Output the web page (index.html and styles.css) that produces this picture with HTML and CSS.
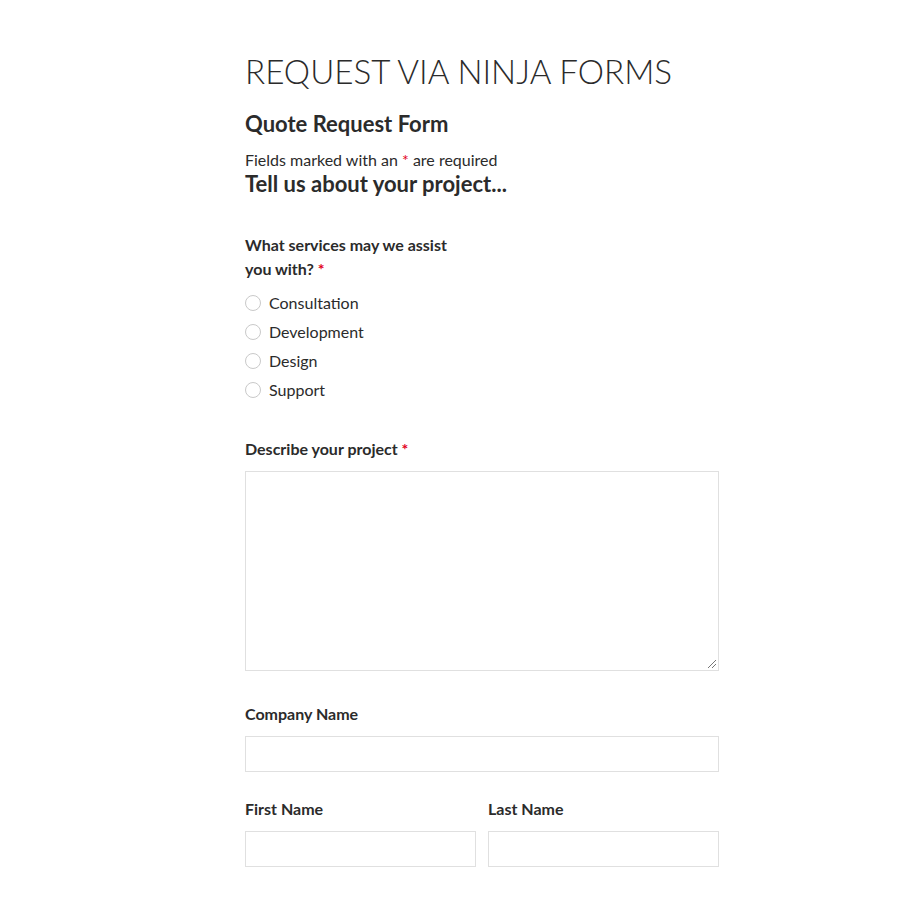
FILE: index.html
```html
<!DOCTYPE html>
<html>
<head>
<meta charset="utf-8">
<link rel="stylesheet" href="styles.css">
</head>
<body>
<main class="page">
  <h1 class="page-title">Request via Ninja Forms</h1>
  <h2 class="form-title">Quote Request Form</h2>
  <p class="req-note">Fields marked with an <span class="req">*</span> are required</p>
  <h3 class="section-title">Tell us about your project...</h3>

  <div class="field field-services">
    <div class="label narrow">What services may we assist you with?&nbsp;<span class="req">*</span></div>
    <ul class="radios">
      <li class="radio-row"><span class="radio"></span>Consultation</li>
      <li class="radio-row"><span class="radio"></span>Development</li>
      <li class="radio-row"><span class="radio"></span>Design</li>
      <li class="radio-row"><span class="radio"></span>Support</li>
    </ul>
  </div>

  <div class="field field-describe">
    <div class="label">Describe your project <span class="req">*</span></div>
    <div class="textarea"><span class="grip"></span></div>
  </div>

  <div class="field field-company">
    <div class="label">Company Name</div>
    <div class="input"></div>
  </div>

  <div class="field-row">
    <div class="field col">
      <div class="label">First Name</div>
      <div class="input"></div>
    </div>
    <div class="field col">
      <div class="label">Last Name</div>
      <div class="input"></div>
    </div>
  </div>
</main>
</body>
</html>
```
FILE: styles.css
```css
* { box-sizing: border-box; }
html, body { margin: 0; padding: 0; background: #fff; }
body {
  font-family: Lato, "Open Sans", sans-serif;
  color: #2b2b2b;
  font-size: 16px;
}
.page {
  width: 474px;
  margin-left: 245px;
  padding-top: 50px;
}
.page-title {
  margin: 0;
  font-weight: 300;
  font-size: 33.2px;
  line-height: 43px;
  text-transform: uppercase;
  color: #2b2b2b;
}
.form-title {
  margin: 18px 0 0;
  font-weight: 700;
  font-size: 22px;
  line-height: 26px;
}
.req-note {
  margin: 11px 0 0;
  font-size: 16px;
  line-height: 24px;
}
.req { color: #e2001a; }
.section-title {
  margin: 0;
  font-weight: 700;
  font-size: 22px;
  line-height: 24px;
}
.label {
  font-weight: 700;
  font-size: 16px;
  line-height: 24px;
}
.label.narrow { width: 215px; }
.field-services { margin-top: 37px; }
.radios {
  list-style: none;
  margin: 7px 0 0;
  padding: 0;
}
.radio-row {
  display: flex;
  align-items: center;
  height: 29px;
  font-size: 16px;
}
.radio {
  width: 16px;
  height: 16px;
  border: 1px solid #c9c9c9;
  border-radius: 50%;
  margin-right: 8px;
  background: #fff;
}
.field-describe { margin-top: 33px; }
.textarea {
  position: relative;
  margin-top: 10px;
  height: 200px;
  border: 1px solid #e0e0e0;
}
.grip {
  position: absolute;
  right: 2px;
  bottom: 2px;
  width: 8px;
  height: 8px;
  background: linear-gradient(135deg, transparent 45%, #777 45%, #777 55%, transparent 55%, transparent 70%, #777 70%, #777 80%, transparent 80%);
}
.field-company { margin-top: 31px; }
.input {
  margin-top: 10px;
  height: 36px;
  border: 1px solid #e0e0e0;
}
.field-row {
  display: flex;
  gap: 12px;
  margin-top: 25px;
}
.col { flex: 1; }
```
